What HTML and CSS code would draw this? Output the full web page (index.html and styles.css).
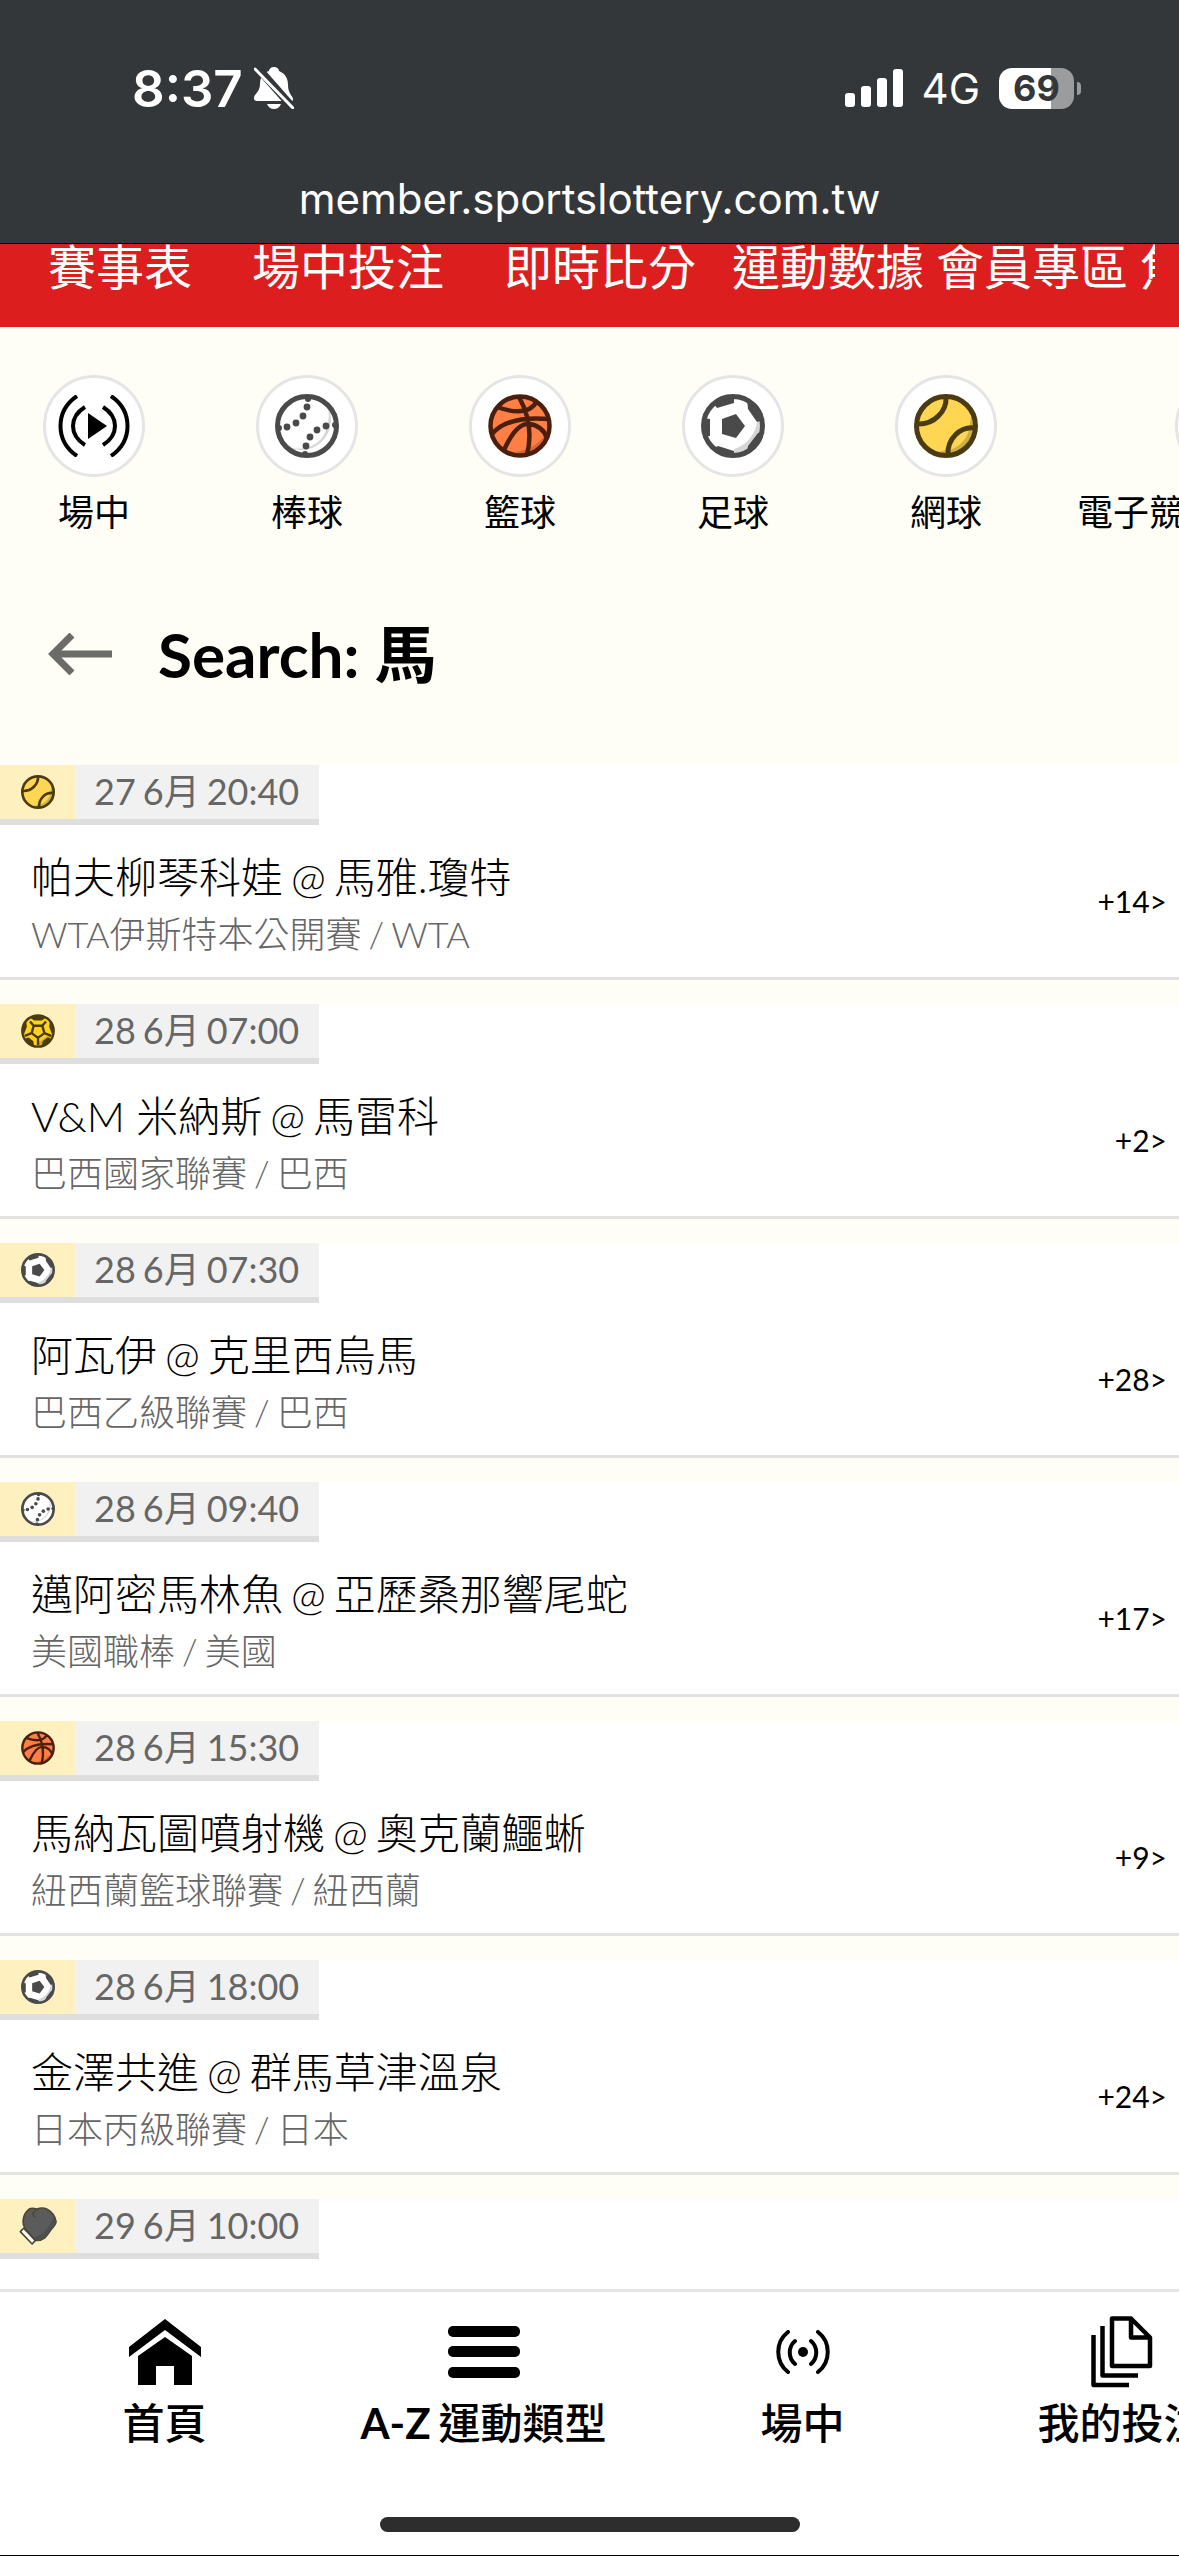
FILE: index.html
```html
<!DOCTYPE html>
<html lang="zh-Hant">
<head>
<meta charset="utf-8">
<meta name="viewport" content="width=device-width, initial-scale=1">
<title>Search: 馬</title>
<link rel="stylesheet" href="styles.css">
</head>
<body>
<svg class="defs" aria-hidden="true">
  <symbol id="baseball" viewBox="0 0 64 64">
    <circle cx="32" cy="32" r="29.500" fill="#fff"/>
    <path d="M53 13a30 30 0 0 1-40 40c14 4 26 0 33-8s9-21 7-32z" fill="#d6d6d6"/>
    <circle cx="32" cy="32" r="29.500" fill="none" stroke="#4a4a4a" stroke-width="5"/>
    <g fill="#4a4a4a"><circle cx="33" cy="5" r="3"/><circle cx="32" cy="13" r="3.400"/><circle cx="28" cy="22" r="3.400"/><circle cx="21" cy="29" r="3.400"/><circle cx="12" cy="33" r="3.400"/><circle cx="4" cy="34" r="3"/><circle cx="60" cy="31" r="3"/><circle cx="51" cy="32" r="3.400"/><circle cx="42" cy="36" r="3.400"/><circle cx="35" cy="43" r="3.400"/><circle cx="31" cy="52" r="3.400"/><circle cx="30" cy="60" r="3"/></g>
  </symbol>
  <symbol id="basketball" viewBox="0 0 64 64">
    <circle cx="32" cy="32" r="29.500" fill="#ff7f45"/>
    <path d="M61 32a29 29 0 0 1-42 26c18 1 36-7 42-26z" fill="#d9672f"/>
    <g fill="none" stroke="#4a1f0e" stroke-width="4.500"><circle cx="32" cy="32" r="29.500"/><path d="M31 3c10 18 13 38 8 58M9 13c14 5 32 9 40-6M4 40c12-14 34-17 57-15M16 56c9-20 17-27 25-26 9 1 15 6 18 14"/></g>
  </symbol>
  <symbol id="soccer" viewBox="0 0 64 64">
    <circle cx="32" cy="32" r="29.500" fill="#fff"/>
    <path d="M61 24a30 30 0 0 1-28 37v-6c13-4 22-15 24-31z" fill="#d6d6d6"/>
    <circle cx="32" cy="32" r="29.500" fill="none" stroke="#4a4a4a" stroke-width="5"/>
    <path d="M21 25l14-5 9 12-9 12-14-4zM13 10l3 4 17-5V3H22zM46 5l1 10 9 13 6-2-5-14zM2 24l7 1v17l-7 1zM13 54l4-2 16 5v4H22zM61 38l-4 1-10 13-1 7 10-8z" fill="#4a4a4a"/>
  </symbol>
  <symbol id="tennis" viewBox="0 0 64 64">
    <circle cx="32" cy="32" r="29.500" fill="#ffd652"/>
    <path d="M57 16c2 24-16 41-38 43a30 30 0 0 0 42-27z" fill="#cfae42"/>
    <path d="M36 56c0-13 8-22 20-24-2 12-9 20-20 24z" fill="#ffd652"/>
    <g fill="none" stroke="#4b3b12" stroke-width="5"><circle cx="32" cy="32" r="29.500"/><path d="M32 3c1 14-12 28-29 27M61 34C46 32 33 45 34 61"/></g>
  </symbol>
  <symbol id="soccer-gold" viewBox="0 0 64 64">
    <circle cx="32" cy="32" r="29.500" fill="#ffd21f"/>
    <path d="M58 36c-2 14-12 22-24 25l-1-8 12-8z" fill="#d9aa1d"/>
    <g fill="none" stroke="#4b3b12" stroke-width="4.500" stroke-linejoin="round"><circle cx="32" cy="32" r="29.500"/><path d="M24 22h16l4 14-12 9-12-9zM24 22l-7-8M40 22l7-8M44 36l13 5M20 36L7 41M32 45v14"/></g>
    <path d="M17 7l15-5 15 5-8 5H25zM2 22l8-7 1 9-5 13-4-2zM62 22l-8-7-1 9 5 13 4-2zM8 46l6-2 9 7 2 9-9-3zM56 46l-6-2-9 7-2 9 9-3z" fill="#4b3b12"/>
  </symbol>
  <symbol id="glove" viewBox="54 26 116 114">
    <path d="M68 90l36 37-10 11-36-38z" fill="#fff" stroke="#4a4634" stroke-width="5" stroke-linejoin="round"/>
    <path d="M72 90C62 74 66 46 84 32c8-5 18-3 24 0 10-5 24-4 32 0 14 8 24 20 27 37 0 8-6 14-12 21-8 10-14 20-22 29-8 6-20 9-29 8z" fill="#5b5b5b" stroke="#4a4634" stroke-width="5" stroke-linejoin="round"/>
    <path d="M167 69c0 8-6 14-12 21-8 10-14 20-22 29-8 6-20 9-29 8l-8-8c30-6 50-28 62-62z" fill="#4e4e4e"/>
    <path d="M108 32l-12 13c0 5 3 8 7 10" fill="none" stroke="#4a4634" stroke-width="4" stroke-linecap="round"/>
  </symbol>
</svg>

<div class="app">
  <header class="browser">
    <div class="status">
      <div class="status-group">
        <span class="clock">8:37</span>
        <svg class="bell" viewBox="0 0 40 42" aria-label="Silent"><path d="M20 0c3 0 5 2 5 4 7 3 9 8 9 14 0 9 5 11 5 14 0 2-1 2-2 2H3c-2 0-3-1-3-3 0-4 6-6 6-14C6 10 9 6 15 4c0-2 2-4 5-4zM13 37h14c-1 3-4 5-7 5s-6-2-7-5z" fill="#fff"/><path d="M3 0l37 42" stroke="#34373a" stroke-width="8"/><path d="M1 2l38 39" stroke="#fff" stroke-width="3" stroke-linecap="round"/></svg>
      </div>
      <div class="status-group status-group--right">
        <svg class="signal" viewBox="0 0 58 38" aria-label="Signal"><g fill="#fff"><rect y="24" width="10" height="14" rx="3"/><rect x="16" y="17" width="10" height="21" rx="3"/><rect x="32" y="9" width="10" height="29" rx="3"/><rect x="48" width="10" height="38" rx="3"/></g></svg>
        <span class="network">4G</span>
        <span class="battery">69</span>
      </div>
    </div>
    <div class="url">member.sportslottery.com.tw</div>
  </header>

  <nav class="topnav">
    <div class="topnav-track">
      <a class="topnav-wide" href="#">賽事表</a>
      <a class="topnav-wide" href="#">場中投注</a>
      <a class="topnav-mid" href="#">即時比分</a>
      <a href="#">運動數據</a>
      <a href="#">會員專區</a>
      <a href="#">焦點</a>
    </div>
  </nav>

  <main class="content">
    <nav class="sports">
      <a class="sport" href="#"><span class="sport-disc"><svg class="live-icon" viewBox="0 0 72 62"><g fill="none" stroke="#000" stroke-width="4"><path d="M19 1C-3 16-3 46 19 61M53 1c22 15 22 45 0 60M27 12c-16 10-16 28 0 38M45 12c16 10 16 28 0 38"/></g><path d="M30 18l19 13-19 13z"/></svg></span><span>場中</span></a>
      <a class="sport" href="#"><span class="sport-disc"><svg class="ball"><use href="#baseball"/></svg></span><span>棒球</span></a>
      <a class="sport" href="#"><span class="sport-disc"><svg class="ball"><use href="#basketball"/></svg></span><span>籃球</span></a>
      <a class="sport" href="#"><span class="sport-disc"><svg class="ball"><use href="#soccer"/></svg></span><span>足球</span></a>
      <a class="sport" href="#"><span class="sport-disc"><svg class="ball"><use href="#tennis"/></svg></span><span>網球</span></a>
      <a class="sport sport--wide" href="#"><span class="sport-disc"></span><span class="sport-name">電子競技</span></a>
    </nav>

    <div class="search">
      <button class="back" type="button" aria-label="Back"><svg class="back-icon" viewBox="0 0 64 42"><path d="M24 2L5 21l19 19M5 21h59" fill="none" stroke="#6b6b68" stroke-width="7"/></svg></button>
      <h1 class="search-title">Search: 馬</h1>
    </div>

    <div class="events">
      <article class="event">
        <div class="tag"><span class="tag-icon"><svg class="tag-ball"><use href="#tennis"/></svg></span><time class="tag-time"><span>27</span> <span>6月</span> <span>20:40</span></time></div>
        <div class="event-body"><div class="event-text"><h2 class="teams"><span>帕夫柳琴科娃</span> <span>@</span> <span>馬雅.瓊特</span></h2><p class="league"><span>WTA伊斯特本公開賽</span> <span>/</span> <span>WTA</span></p></div><a class="more" href="#">+14&gt;</a></div>
      </article>
      <article class="event">
        <div class="tag"><span class="tag-icon"><svg class="tag-ball"><use href="#soccer-gold"/></svg></span><time class="tag-time"><span>28</span> <span>6月</span> <span>07:00</span></time></div>
        <div class="event-body"><div class="event-text"><h2 class="teams"><span>V&amp;M 米納斯</span> <span>@</span> <span>馬雷科</span></h2><p class="league"><span>巴西國家聯賽</span> <span>/</span> <span>巴西</span></p></div><a class="more" href="#">+2&gt;</a></div>
      </article>
      <article class="event">
        <div class="tag"><span class="tag-icon"><svg class="tag-ball"><use href="#soccer"/></svg></span><time class="tag-time"><span>28</span> <span>6月</span> <span>07:30</span></time></div>
        <div class="event-body"><div class="event-text"><h2 class="teams"><span>阿瓦伊</span> <span>@</span> <span>克里西烏馬</span></h2><p class="league"><span>巴西乙級聯賽</span> <span>/</span> <span>巴西</span></p></div><a class="more" href="#">+28&gt;</a></div>
      </article>
      <article class="event">
        <div class="tag"><span class="tag-icon"><svg class="tag-ball"><use href="#baseball"/></svg></span><time class="tag-time"><span>28</span> <span>6月</span> <span>09:40</span></time></div>
        <div class="event-body"><div class="event-text"><h2 class="teams"><span>邁阿密馬林魚</span> <span>@</span> <span>亞歷桑那響尾蛇</span></h2><p class="league"><span>美國職棒</span> <span>/</span> <span>美國</span></p></div><a class="more" href="#">+17&gt;</a></div>
      </article>
      <article class="event">
        <div class="tag"><span class="tag-icon"><svg class="tag-ball"><use href="#basketball"/></svg></span><time class="tag-time"><span>28</span> <span>6月</span> <span>15:30</span></time></div>
        <div class="event-body"><div class="event-text"><h2 class="teams"><span>馬納瓦圖噴射機</span> <span>@</span> <span>奧克蘭鱷蜥</span></h2><p class="league"><span>紐西蘭籃球聯賽</span> <span>/</span> <span>紐西蘭</span></p></div><a class="more" href="#">+9&gt;</a></div>
      </article>
      <article class="event">
        <div class="tag"><span class="tag-icon"><svg class="tag-ball"><use href="#soccer"/></svg></span><time class="tag-time"><span>28</span> <span>6月</span> <span>18:00</span></time></div>
        <div class="event-body"><div class="event-text"><h2 class="teams"><span>金澤共進</span> <span>@</span> <span>群馬草津溫泉</span></h2><p class="league"><span>日本丙級聯賽</span> <span>/</span> <span>日本</span></p></div><a class="more" href="#">+24&gt;</a></div>
      </article>
      <article class="event">
        <div class="tag"><span class="tag-icon"><svg class="tag-glove"><use href="#glove"/></svg></span><time class="tag-time"><span>29</span> <span>6月</span> <span>10:00</span></time></div>
        <div class="event-body"></div>
      </article>
    </div>
  </main>

  <footer class="dock">
    <nav class="tabs">
      <a class="tab" href="#"><span class="tab-icon"><svg width="72" height="68" viewBox="0 0 72 68"><path d="M0 29L36 1l36 28v10L36 12 0 39z"/><path d="M9 38l27-19 27 19v29H45V48H27v19H9z"/></svg></span><span>首頁</span></a>
      <a class="tab" href="#"><span class="tab-icon"><svg width="72" height="52" viewBox="0 0 72 52"><rect width="72" height="11" rx="5"/><rect y="20" width="72" height="11" rx="5"/><rect y="41" width="72" height="11" rx="5"/></svg></span><span class="tab-label"><b>A-Z</b> <span>運動類型</span></span></a>
      <a class="tab" href="#"><span class="tab-icon"><svg width="54" height="44" viewBox="0 0 54 44"><circle cx="27" cy="22" r="5"/><g fill="none" stroke="#000" stroke-width="4" stroke-linecap="round"><path d="M12 2C-1 12-1 32 12 42M42 2c13 10 13 30 0 40M19 11c-7 6-7 17 0 23M35 11c7 6 7 17 0 23"/></g></svg></span><span>場中</span></a>
      <a class="tab" href="#"><span class="tab-icon"><svg width="62" height="72" viewBox="0 0 62 72"><path d="M21 2.500h19l19 19V50H21zM40 2.500v19h19M11.500 10v49.500H47M2.500 19v50H38" fill="none" stroke="#000" stroke-width="4.500" stroke-linejoin="round"/></svg></span><span>我的投注</span></a>
    </nav>
    <div class="home-bar"></div>
  </footer>
</div>
</body>
</html>
```
FILE: styles.css
```css
* {
  box-sizing: border-box;
  margin: 0;
}

body {
  background: #fffef6;
  color: #000;
  font-family: Lato, "Noto Sans CJK TC", sans-serif;
}

a {
  color: inherit;
  text-decoration: none;
}

.defs {
  position: absolute;
  width: 0;
  height: 0;
}

.app {
  display: flex;
  flex-direction: column;
  height: 100vh;
  overflow: hidden;
  border-bottom: 1px solid #000;
}

/* Phone status bar and address */
.browser {
  flex: none;
  background: #34373a;
  border-bottom: 1px solid #000;
  color: #fff;
  font-family: Inter, sans-serif;
}

.status {
  display: flex;
  justify-content: space-between;
  align-items: center;
  height: 176px;
  padding: 0 105px 0 132px;
}

.status-group {
  display: flex;
  align-items: center;
  gap: 11px;
}

.status-group--right {
  gap: 19px;
}

.clock {
  font-size: 51px;
  font-weight: 600;
}

.bell {
  width: 40px;
  height: 42px;
}

.signal {
  width: 58px;
  height: 38px;
}

.network {
  font-size: 42px;
}

.battery {
  position: relative;
  width: 75px;
  height: 41px;
  border-radius: 13px;
  background: linear-gradient(to right, #fff 69%, #9b9c9d 69%);
  color: #34373a;
  font-size: 36px;
  font-weight: 700;
  line-height: 41px;
  text-align: center;
}

.battery::after {
  content: "";
  position: absolute;
  right: -7px;
  top: 14px;
  width: 4px;
  height: 13px;
  border-radius: 0 4px 4px 0;
  background: #9b9c9d;
}

.url {
  height: 67px;
  font-size: 42px;
  line-height: 46px;
  text-align: center;
}

/* Site navigation */
.topnav {
  flex: none;
  height: 83px;
  padding: 0 24px 0 48px;
  background: #dc1e1e;
  color: #fff;
}

.topnav-track {
  display: flex;
  gap: 12px;
  overflow-x: clip;
  font-size: 48px;
  line-height: 46px;
  white-space: nowrap;
}

.topnav-wide {
  margin-right: 48px;
}

.topnav-mid {
  margin-right: 24px;
}

.content {
  flex: 1;
  min-height: 0;
  overflow: hidden;
}

/* Sport picker */
.sports {
  display: flex;
  gap: 49px;
  padding: 48px 0 0 12px;
  overflow: hidden;
  white-space: nowrap;
}

.sport {
  display: flex;
  flex: none;
  flex-direction: column;
  align-items: center;
  gap: 11px;
  width: 164px;
  font-size: 36px;
  line-height: 48px;
}

.sport--wide {
  width: 298px;
}

.sport-name {
  align-self: flex-start;
}

.sport-disc {
  display: flex;
  align-items: center;
  justify-content: center;
  width: 102px;
  height: 102px;
  border: 3px solid #e5e5e5;
  border-radius: 50%;
  background: #fff;
}

.live-icon {
  width: 72px;
  height: 62px;
}

.ball {
  width: 64px;
  height: 64px;
}

/* Search heading */
.search {
  display: flex;
  align-items: center;
  gap: 46px;
  height: 229px;
  padding: 6px 48px 0;
}

.back {
  display: flex;
  padding: 0;
  border: 0;
  background: none;
}

.back-icon {
  width: 64px;
  height: 42px;
}

.search-title {
  font-size: 62px;
  font-weight: 700;
  line-height: 72px;
}

/* Event list */
.events {
  display: flex;
  flex-direction: column;
  gap: 24px;
}

.event {
  display: flex;
  flex-direction: column;
  align-items: stretch;
  background: #fff;
  border-bottom: 3px solid #e2e2e2;
}

.tag {
  display: flex;
  align-self: flex-start;
  border-bottom: 6px solid #dedede;
  background: #f1f1f1;
}

.tag-icon {
  display: flex;
  align-items: center;
  justify-content: center;
  width: 75px;
  height: 54px;
  background: #fff1bf;
}

.tag-ball {
  width: 34px;
  height: 34px;
}

.tag-glove {
  width: 38px;
  height: 38px;
}

.tag-time {
  display: flex;
  gap: 7px;
  padding: 0 20px 0 19px;
  color: #666;
  font-size: 36px;
  line-height: 53px;
}

.event-body {
  display: flex;
  align-items: center;
  justify-content: space-between;
  min-height: 152px;
  padding: 0 12px 0 31px;
}

.event-text {
  padding-top: 6px;
}

.teams {
  display: flex;
  gap: 8px;
  font-size: 42px;
  font-weight: 300;
  line-height: 60px;
}

.league {
  display: flex;
  gap: 7px;
  color: #666;
  font-size: 36px;
  font-weight: 300;
  line-height: 54px;
}

.more {
  font-size: 30px;
}

/* Bottom tabs */
.dock {
  flex: none;
  border-top: 3px solid #e5e5e5;
  background: #fff;
}

.tabs {
  display: flex;
  padding: 18px 0 0 5px;
  overflow: hidden;
}

.tab {
  display: flex;
  flex: none;
  flex-direction: column;
  align-items: center;
  gap: 2px;
  width: 319px;
  font-size: 42px;
  font-weight: 500;
  line-height: 54px;
}

.tab-label {
  display: flex;
  gap: 8px;
}

.tab-icon {
  display: flex;
  align-items: center;
  height: 84px;
}

.home-bar {
  width: 420px;
  height: 15px;
  margin: 67px auto 23px;
  border-radius: 8px;
  background: #2d2d2d;
}
```
